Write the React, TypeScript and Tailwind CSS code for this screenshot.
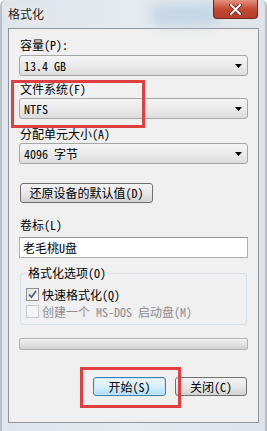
import React from "react";

const cjk = "font-['Noto_Sans_Mono_CJK_SC','Noto_Sans_CJK_SC',sans-serif]";

function Arrow() {
  return (
    <svg width="7" height="4" viewBox="0 0 7 4" className="shrink-0">
      <path d="M0 0 H7 L3.5 4 Z" fill="#000" />
    </svg>
  );
}

function Combo({ value }: { value: string }) {
  return (
    <div className="flex h-[21px] items-center justify-between rounded-[3px] border border-[#a7a7a7] bg-gradient-to-b from-[#f4f4f4] via-[#ebebeb] to-[#dcdcdc] pl-[4px] pr-[5px] text-[12px] leading-none text-black">
      <span>{value}</span>
      <Arrow />
    </div>
  );
}

function Label({ children, className = "" }: { children: React.ReactNode; className?: string }) {
  return <div className={`h-[14px] text-[12px] leading-[14px] text-black ${className}`}>{children}</div>;
}

function CheckBox({ checked, disabled }: { checked?: boolean; disabled?: boolean }) {
  return (
    <div
      className={`flex h-[13px] w-[13px] shrink-0 items-center justify-center border ${
        disabled ? "border-[#c9c9c9] bg-[#f5f5f5]" : "border-[#8f8f8f] bg-gradient-to-br from-[#e3e3e3] to-[#fbfbfb]"
      }`}
    >
      {checked && (
        <svg width="9" height="9" viewBox="0 0 9 9">
          <path d="M1 4.5 L3.5 7.2 L8 1" fill="none" stroke="#4a5d92" strokeWidth="1.8" />
        </svg>
      )}
    </div>
  );
}

export default function App() {
  return (
    <div
      className={`relative flex h-[431px] w-[267px] flex-col overflow-hidden rounded-t-[6px] border-x-[2px] border-x-[#b9c0c8] bg-gradient-to-r from-[#dfe5eb] via-[#e6ebf0] to-[#dde4ea] ${cjk}`}
    >
      {/* glass highlight behind title */}
      <div className="pointer-events-none absolute left-[148px] top-[4px] h-[22px] w-[70px] rounded-full bg-[#b9cfe0] opacity-70 blur-[6px]" />

      {/* title bar */}
      <div className="relative flex h-[28px] shrink-0 items-start pl-[6px] pt-[7px]">
        <span className="text-[12px] leading-[14px] text-[#222] [text-shadow:0_0_6px_#fff]">格式化</span>
        <div className="absolute right-[7px] top-0 flex h-[19px] w-[45px] items-center justify-center rounded-b-[4px] border border-t-0 border-[#6b2a22] bg-gradient-to-b from-[#e2907f] via-[#c64a35] to-[#b33c2a]">
          <svg width="13" height="11" viewBox="0 0 13 11">
            <path d="M2 1 L11 10 M11 1 L2 10" stroke="#5a1d14" strokeWidth="3.6" strokeLinecap="square" />
            <path d="M2 1 L11 10 M11 1 L2 10" stroke="#fff" strokeWidth="2" strokeLinecap="square" />
          </svg>
        </div>
      </div>

      {/* client area */}
      <div className="mx-[6px] mb-[8px] flex flex-1 flex-col border border-[#8d959e] bg-[#f0f0f0] px-[10px]">
        <Label className="mt-[9px] pl-[1px]">容量(P):</Label>
        <div className="mt-[3px]">
          <Combo value="13.4 GB" />
        </div>

        <Label className="mt-[6px] pl-[1px]">文件系统(F)</Label>
        <div className="mt-[2px]">
          <Combo value="NTFS" />
        </div>

        <Label className="mt-[8px] pl-[1px]">分配单元大小(A)</Label>
        <div className="mt-[2px]">
          <Combo value="4096 字节" />
        </div>

        <div className="ml-[1px] mt-[19px] flex h-[20px] w-[133px] items-center justify-center rounded-[3px] border border-[#707070] bg-gradient-to-b from-[#f3f3f3] via-[#e8e8e8] to-[#d2d2d2] text-[12px] leading-none text-black">
          还原设备的默认值(D)
        </div>

        <Label className="mt-[15px] pl-[1px]">卷标(L)</Label>
        <div className="mt-[5px] flex h-[21px] items-center border border-[#abadb3] border-t-[#8f939b] bg-white pl-[3px] text-[12px] leading-none text-black">
          老毛桃U盘
        </div>

        {/* options group */}
        <div className="relative ml-[1px] mr-[1px] mt-[15px] flex flex-col gap-[4px] rounded-[3px] border border-[#d5dfe5] pb-[6px] pl-[5px] pt-[14px]">
          <span className="absolute -top-[8px] left-[6px] bg-[#f0f0f0] px-[1px] text-[12px] leading-[14px] text-black">
            格式化选项(O)
          </span>
          <div className="flex items-center gap-[3px] text-[12px] leading-[13px] text-black">
            <CheckBox checked />
            <span>快速格式化(Q)</span>
          </div>
          <div className="flex items-center gap-[3px] text-[12px] leading-[13px] text-[#8d8d8d]">
            <CheckBox disabled />
            <span>创建一个 MS-DOS 启动盘(M)</span>
          </div>
        </div>

        {/* progress */}
        <div className="mt-[13px] h-[12px] rounded-[2px] border border-[#b2b2b2] bg-gradient-to-b from-[#f2f2f2] via-[#e2e2e2] to-[#d0d0d0]" />

        {/* buttons */}
        <div className="mr-[1px] mt-[27px] flex justify-end gap-[9px]">
          <div className="flex h-[19px] w-[73px] items-center justify-center rounded-[3px] border border-[#3c7fb1] bg-gradient-to-b from-[#eaf6fd] via-[#d9f0fc] to-[#a9dbf6] text-[12px] leading-none text-black shadow-[inset_0_0_0_1px_#cbe6f5]">
            开始(S)
          </div>
          <div className="flex h-[19px] w-[72px] items-center justify-center rounded-[3px] border border-[#707070] bg-gradient-to-b from-[#f3f3f3] via-[#e8e8e8] to-[#d2d2d2] text-[12px] leading-none text-black">
            关闭(C)
          </div>
        </div>
      </div>

      {/* red annotation rectangles */}
      <div className="pointer-events-none absolute left-[9px] top-[80px] h-[48px] w-[134px] border-[3px] border-[#e03f3f]" />
      <div className="pointer-events-none absolute left-[78px] top-[367px] h-[41px] w-[101px] border-[3px] border-[#e03f3f]" />
    </div>
  );
}
